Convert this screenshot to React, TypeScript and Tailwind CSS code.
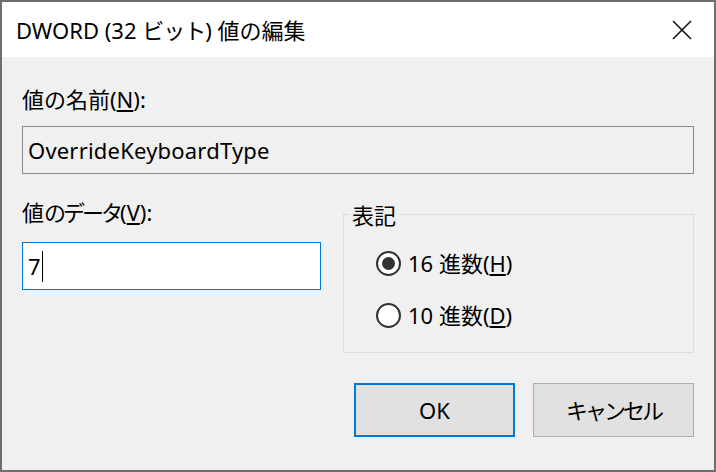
import React from 'react';

const font = { fontFamily: '"Noto Sans", "Noto Sans CJK JP", sans-serif' };

function Radio({ checked }: { checked: boolean }) {
  return (
    <span className="flex h-[25px] w-[25px] items-center justify-center rounded-full border-2 border-[#333333] bg-white">
      {checked && <span className="h-[13px] w-[13px] rounded-full bg-[#333333]" />}
    </span>
  );
}

export default function App() {
  return (
    <div
      className="flex h-[472px] w-[716px] flex-col border-2 border-[#6e6e6e] bg-[#f0f0f0] text-[22px] leading-[30px] text-black"
      style={font}
    >
      {/* Title bar */}
      <div className="flex h-[55px] items-center justify-between bg-white pl-[14px] pr-[22px]">
        <span className="text-[22px]">
          DWORD (32 <span className="tracking-[-1px]">ビット</span>) 値の編集
        </span>
        <svg width="20" height="20" viewBox="0 0 20 20" className="text-[#111]">
          <path d="M1 1L19 19M19 1L1 19" stroke="currentColor" strokeWidth="1.6" />
        </svg>
      </div>

      {/* Body */}
      <div className="flex flex-1 flex-col px-[20px] pt-[27px]">
        <div>
          値の名前(<span className="underline underline-offset-2">N</span>):
        </div>
        <div className="mt-[12px] flex h-[48px] items-center border border-[#8a8a8a] px-[5px]">
          <span className="tracking-[0.2px]">OverrideKeyboardType</span>
        </div>

        <div className="mt-[23px] flex">
          <div className="w-[299px]">
            <div>
              値<span className="tracking-[-3px]">のデータ</span>(
              <span className="underline underline-offset-2">V</span>):
            </div>
            <div className="mt-[15px] flex h-[48px] items-center border border-[#0078d7] bg-white px-[5px]">
              <span>7</span>
              <span className="ml-[1px] h-[31px] w-[1px] bg-black" />
            </div>
          </div>

          <div className="relative ml-[22px] mt-[17px] h-[139px] w-[351px] border border-[#dcdcdc]">
            <span className="absolute -top-[15px] left-[6px] bg-[#f0f0f0] px-[2px]">表記</span>
            <div className="flex flex-col gap-[22px] pl-[32px] pt-[33px]">
              <div className="flex items-center gap-[7px]">
                <Radio checked />
                <span>
                  16 進数(<span className="underline underline-offset-2">H</span>)
                </span>
              </div>
              <div className="flex items-center gap-[7px]">
                <Radio checked={false} />
                <span>
                  10 進数(<span className="underline underline-offset-2">D</span>)
                </span>
              </div>
            </div>
          </div>
        </div>

        <div className="mt-[30px] flex justify-end gap-[18px]">
          <button className="flex h-[54px] w-[161px] items-center justify-center border-2 border-[#0078d7] bg-[#e1e1e1]">
            OK
          </button>
          <button className="flex h-[54px] w-[161px] items-center justify-center border border-[#adadad] bg-[#e1e1e1]">
            <span className="tracking-[-3px]">キャンセル</span>
          </button>
        </div>
      </div>
    </div>
  );
}
